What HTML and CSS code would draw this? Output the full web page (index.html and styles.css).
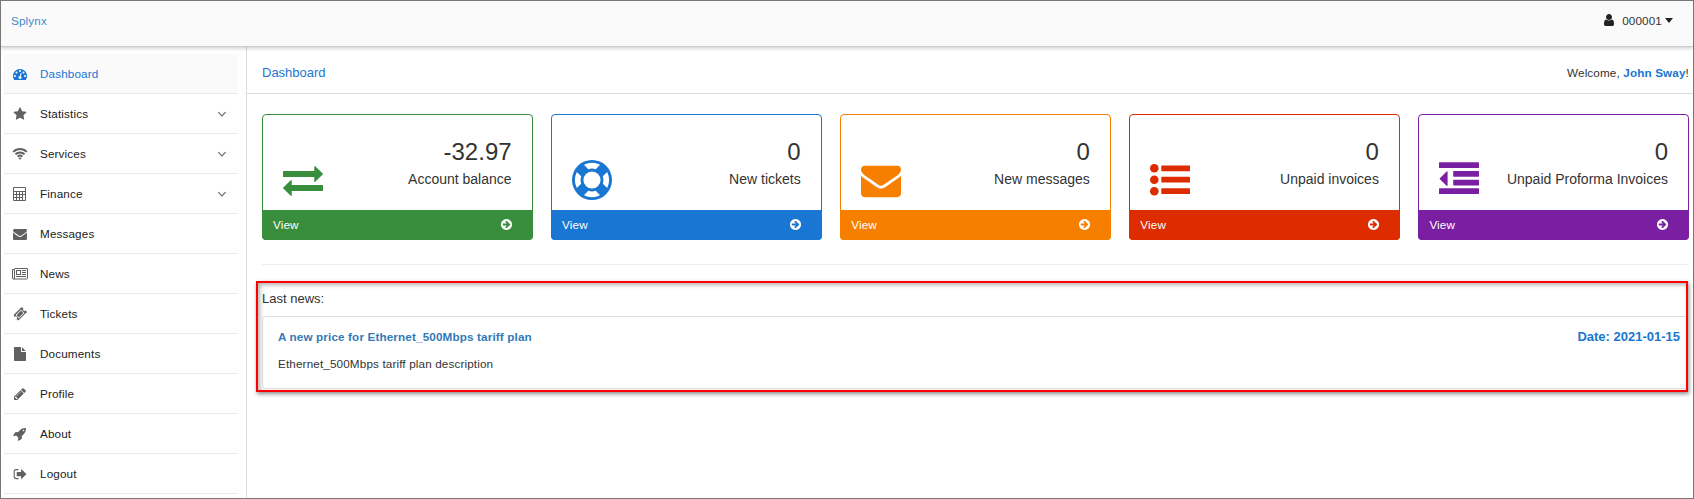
FILE: index.html
```html
<!DOCTYPE html>
<html lang="en">
<head>
<meta charset="utf-8">
<title>Dashboard</title>
<link rel="stylesheet" href="styles.css">
</head>
<body>
<svg class="sprite" aria-hidden="true">
  <symbol id="gauge" viewBox="0 0 1792 1792"><path d="M384 1152q0-53-37.5-90.5t-90.5-37.5-90.5 37.5-37.5 90.5 37.5 90.5 90.5 37.5 90.5-37.5 37.5-90.5zm192-448q0-53-37.5-90.5t-90.5-37.5-90.5 37.5-37.5 90.5 37.5 90.5 90.5 37.5 90.5-37.5 37.5-90.5zm428 481l101-382q6-26-7.5-48.5t-38.5-29.5-48 6.5-30 39.5l-101 382q-60 5-107 43.5t-63 98.5q-20 77 20 146t117 89 146-20 89-117q16-60-6-117t-72-91zm660-33q0-53-37.5-90.5t-90.5-37.5-90.5 37.5-37.5 90.5 37.5 90.5 90.5 37.5 90.5-37.5 37.5-90.5zm-640-640q0-53-37.5-90.5t-90.5-37.5-90.5 37.5-37.5 90.5 37.5 90.5 90.5 37.5 90.5-37.5 37.5-90.5zm448 192q0-53-37.5-90.5t-90.5-37.5-90.5 37.5-37.5 90.5 37.5 90.5 90.5 37.5 90.5-37.5 37.5-90.5zm320 448q0 261-141 483-19 29-54 29h-1402q-35 0-54-29-141-221-141-483 0-182 71-348t191-286 286-191 348-71 348 71 286 191 191 286 71 348z"/></symbol>
  <symbol id="star" viewBox="0 0 1792 1792"><path d="M1728 647q0 22-26 48l-363 354 86 500q1 7 1 20 0 21-10.5 35.5t-30.5 14.5q-19 0-40-12l-449-236-449 236q-22 12-40 12-21 0-31.5-14.5t-10.5-35.5q0-6 2-20l86-500-364-354q-25-27-25-48 0-37 56-46l502-73 225-455q19-41 49-41t49 41l225 455 502 73q56 9 56 46z"/></symbol>
  <symbol id="wifi" viewBox="0 0 16 16"><g fill="none" stroke="currentColor" stroke-width="1.9"><path d="M1.200 5.800a9.600 9.600 0 0 1 13.600 0M3.500 8.300a6.400 6.400 0 0 1 9 0M5.700 10.700a3.300 3.300 0 0 1 4.600 0"/></g><path d="M6.500 12.200a2.300 2.300 0 0 1 3 0L8 13.700z"/></symbol>
  <symbol id="calc" viewBox="0 0 14 14"><path fill-rule="evenodd" d="M1 0h11a1 1 0 0 1 1 1v12a1 1 0 0 1-1 1H1a1 1 0 0 1-1-1V1a1 1 0 0 1 1-1zm0 1v3h11V1zM1 5v2h2V5zM4 5v2h2V5zM7 5v2h2V5zM10 5v2h2V5zM1 8v2h2V8zM4 8v2h2V8zM7 8v2h2V8zM1 11v2h2v-2zM4 11v2h2v-2zM7 11v2h2v-2zM10 8v5h2V8z"/></symbol>
  <symbol id="envelope" viewBox="0 0 1792 1792"><path d="M1792 710v794q0 66-47 113t-113 47h-1472q-66 0-113-47t-47-113v-794q44 49 101 87 362 246 497 345 57 42 92.500 65.500t94.500 48 110 24.500h2q51 0 110-24.500t94.500-48 92.500-65.500q170-123 498-345 57-39 100-87zm0-294q0 79-49 151t-122 123q-376 261-468 325-10 7-42.500 31t-54 38.500-52 32.500-57.500 27-50 9h-2q-23 0-50-9t-57.500-27-52-32.500-54-38.500-42.500-31q-91-64-262-182.500t-205-142.500q-62-42-117-115.500t-55-136.500q0-78 41.500-130t118.500-52h1472q65 0 112.500 47t47.500 113z"/></symbol>
  <symbol id="news" viewBox="0 0 16 12"><path fill="none" stroke="currentColor" d="M2.500.5h13v9.500q0 1-1 1h-13q-1 0-1-1V1.500h2V10q0 1-1 1"/><path fill-rule="evenodd" d="M4 2h5v5H4zm1 1v3h3V3zM10 2h4v1h-4zM10 4h4v1h-4zM10 6h4v1h-4zM4 8h10v1H4z"/></symbol>
  <symbol id="ticket" viewBox="0 0 1792 1792"><path fill-rule="evenodd" d="M1657 762l-895 896q-37 37-90.500 37t-90.500-37l-125-125q56-56 56-136t-56-136-136-56-136 56L135 1136q-37-37-37-90.500T135 955L1030 60q37-37 90.500-37t90.500 37l124 124q-56 56-56 136t56 136 136 56 136-56l125 125q37 37 37 90.500t-112 90.500zM1024 330L330 1024l438 438 694-694z"/><path d="M1024 462l306 306-562 562-306-306z"/></symbol>
  <symbol id="file" viewBox="0 0 1792 1792"><path d="M1152 512V40q22 14 36 28l408 408q14 14 28 36zm-128 32q0 40 28 68t68 28h544v1056q0 40-28 68t-68 28H224q-40 0-68-28t-28-68V96q0-40 28-68t68-28h800z"/></symbol>
  <symbol id="pencil" viewBox="0 0 1792 1792"><path d="M491 1536l91-91-235-235-91 91v107h128v128h107zm523-928q0-22-22-22-10 0-17 7l-542 542q-7 7-7 17 0 22 22 22 10 0 17-7l542-542q7-7 7-17zm-54-192l416 416-832 832h-416v-416zm683 96q0 53-37 90l-166 166-416-416 166-165q36-38 90-38 53 0 91 38l235 234q37 39 37 91z"/></symbol>
  <symbol id="rocket" viewBox="0 0 1792 1792"><path d="M1440 448q0-40-28-68t-68-28-68 28-28 68 28 68 68 28 68-28 28-68zm224-288q0 249-75.500 430.500t-253.500 360.500q-81 80-195 176l-20 379q-2 16-16 26l-384 224q-7 4-16 4-12 0-23-9l-64-64q-13-14-8-32l85-276-281-281-276 85q-3 1-9 1-14 0-23-9l-64-64q-17-19-5-39l224-384q10-14 26-16l379-20q96-114 176-195 188-187 358-258t431-71q14 0 24 9.500t10 22.500z"/></symbol>
  <symbol id="logout" viewBox="0 0 14 14"><path fill="none" stroke="currentColor" stroke-width="1.100" d="M5.500 2.600H3.200Q1.200 2.600 1.200 4.600v5q0 2 2 2h2.300"/><path d="M4.200 5h3.900V2.800q0-.8.700-.3l4.300 4.200q.4.400 0 .8L8.800 11.700q-.7.500-.7-.3V9.200H4.200q-.5 0-.5-.5V5.500q0-.5.500-.5z"/></symbol>
  <symbol id="user" viewBox="0 0 1792 1792"><path d="M1536 1399q0 109-62.500 187t-150.500 78h-854q-88 0-150.500-78t-62.500-187q0-85 8.500-160.500t31.500-152 58.500-131 94-89 134.500-34.500q131 128 313 128t313-128q76 0 134.500 34.500t94 89 58.500 131 31.500 152 8.500 160.500zm-256-887q0 159-112.500 271.500t-271.500 112.500-271.500-112.500-112.500-271.500 112.500-271.500 271.500-112.500 271.500 112.500 112.500 271.500z"/></symbol>
  <symbol id="go" viewBox="0 0 1792 1792"><path d="M1413 896q0-27-18-45l-91-91-362-362q-18-18-45-18t-45 18l-91 91q-18 18-18 45t18 45l189 189h-502q-26 0-45 19t-19 45v128q0 26 19 45t45 19h502l-189 189q-19 19-19 45t19 45l91 91q18 18 45 18t45-18l362-362 91-91q18-18 18-45zm251 0q0 209-103 385.500t-279.500 279.500-385.500 103-385.500-103-279.500-279.500-103-385.500 103-385.500 279.500-279.500 385.500-103 385.500 103 279.500 279.500 103 385.500z"/></symbol>
  <symbol id="down" viewBox="0 0 10 6"><path fill="none" stroke="currentColor" stroke-width="1.200" d="M1.300 1.100l3.700 3.700 3.700-3.700"/></symbol>
  <symbol id="exchange" viewBox="0 0 40 40"><path d="M.5 11H31.300V6.600q0-1 .9-.4l7.500 7.300q.4.500 0 1l-7.500 7.300q-.9.600-.9-.4V17H.5q-.5 0-.5-.5v-5q0-.5.500-.5zM39.500 25H8.700v-4.400q0-1-.9-.4L.300 27.500q-.4.500 0 1l7.500 7.300q.9.600.9-.4V31h30.800q.5 0 .5-.5v-5q0-.5-.5-.5z"/></symbol>
  <symbol id="ring" viewBox="0 0 1792 1792"><path d="M896 0q182 0 348 71t286 191 191 286 71 348-71 348-191 286-286 191-348 71-348-71-286-191-191-286-71-348 71-348 191-286 286-191 348-71zm0 128q-190 0-361 90l194 194q82-28 167-28t167 28l194-194q-171-90-361-90zm-678 1129l194-194q-28-82-28-167t28-167l-194-194q-90 171-90 361t90 361zm678 407q190 0 361-90l-194-194q-82 28-167 28t-167-28l-194 194q171 90 361 90zm0-384q159 0 271.500-112.500t112.500-271.500-112.500-271.500-271.500-112.500-271.500 112.500-112.500 271.500 112.500 271.500 271.500 112.500zm484-217l194 194q90-171 90-361t-90-361l-194 194q28 82 28 167t-28 167z"/></symbol>
  <symbol id="list" viewBox="0 0 40 40"><circle cx="4.300" cy="8.300" r="4.300"/><circle cx="4.300" cy="19.700" r="4.300"/><circle cx="4.300" cy="31.200" r="4.300"/><rect x="11.300" y="5.400" width="28.700" height="5.800" rx=".6"/><rect x="11.300" y="16.800" width="28.700" height="5.800" rx=".6"/><rect x="11.300" y="28.300" width="28.700" height="5.800" rx=".6"/></symbol>
  <symbol id="outdent" viewBox="0 0 40 40"><path d="M8.600 12v13.300q0 1-1 .5L.9 19.200q-.5-.5 0-1l6.700-6.700q1-.5 1 .5z"/><rect y="2.200" width="40" height="5.800" rx=".6"/><rect x="14.200" y="11" width="25.800" height="5.700" rx=".6"/><rect x="14.200" y="19.700" width="25.800" height="5.700" rx=".6"/><rect y="28.200" width="40" height="5.800" rx=".6"/></symbol>
</svg>
<div class="page">
  <header class="topbar">
    <a class="brand">Splynx</a>
    <div class="account"><svg class="icon"><use href="#user"/></svg><span>000001</span><i class="caret"></i></div>
  </header>
  <div class="body">
    <nav class="sidebar">
      <a class="item active"><svg class="icon"><use href="#gauge"/></svg><span>Dashboard</span></a>
      <a class="item"><svg class="icon"><use href="#star"/></svg><span>Statistics</span><svg class="chevron"><use href="#down"/></svg></a>
      <a class="item"><svg class="icon wide"><use href="#wifi"/></svg><span>Services</span><svg class="chevron"><use href="#down"/></svg></a>
      <a class="item"><svg class="icon"><use href="#calc"/></svg><span>Finance</span><svg class="chevron"><use href="#down"/></svg></a>
      <a class="item"><svg class="icon"><use href="#envelope"/></svg><span>Messages</span></a>
      <a class="item"><svg class="icon wide news-icon"><use href="#news"/></svg><span>News</span></a>
      <a class="item"><svg class="icon"><use href="#ticket"/></svg><span>Tickets</span></a>
      <a class="item"><svg class="icon"><use href="#file"/></svg><span>Documents</span></a>
      <a class="item"><svg class="icon"><use href="#pencil"/></svg><span>Profile</span></a>
      <a class="item"><svg class="icon"><use href="#rocket"/></svg><span>About</span></a>
      <a class="item"><svg class="icon"><use href="#logout"/></svg><span>Logout</span></a>
    </nav>
    <main class="content">
      <div class="heading"><h1>Dashboard</h1><p>Welcome, <b>John Sway</b><span>!</span></p></div>
      <section class="cards">
        <article class="card green"><div class="card-main"><svg class="big"><use href="#exchange"/></svg><div class="figures"><strong>-32.97</strong><span>Account balance</span></div></div><a class="view"><span>View</span><svg class="icon"><use href="#go"/></svg></a></article>
        <article class="card blue"><div class="card-main"><svg class="big"><use href="#ring"/></svg><div class="figures"><strong>0</strong><span>New tickets</span></div></div><a class="view"><span>View</span><svg class="icon"><use href="#go"/></svg></a></article>
        <article class="card orange"><div class="card-main"><svg class="big"><use href="#envelope"/></svg><div class="figures"><strong>0</strong><span>New messages</span></div></div><a class="view"><span>View</span><svg class="icon"><use href="#go"/></svg></a></article>
        <article class="card red"><div class="card-main"><svg class="big"><use href="#list"/></svg><div class="figures"><strong>0</strong><span>Unpaid invoices</span></div></div><a class="view"><span>View</span><svg class="icon"><use href="#go"/></svg></a></article>
        <article class="card purple"><div class="card-main"><svg class="big"><use href="#outdent"/></svg><div class="figures"><strong>0</strong><span>Unpaid Proforma Invoices</span></div></div><a class="view"><span>View</span><svg class="icon"><use href="#go"/></svg></a></article>
      </section>
      <hr>
      <section class="news">
        <h2>Last news:</h2>
        <article class="post">
          <div class="post-head"><h3>A new price for Ethernet_500Mbps tariff plan</h3><time>Date: 2021-01-15</time></div>
          <p>Ethernet_500Mbps tariff plan description</p>
        </article>
      </section>
    </main>
  </div>
</div>
</body>
</html>
```
FILE: styles.css
```css
* { box-sizing: border-box; }
body { margin: 0; background: #fff; color: #333; font: 11.7px/18px "Liberation Sans", Arial, sans-serif; letter-spacing: .14px; overflow: hidden; }
h1, h2, h3, p { margin: 0; font-weight: normal; }
svg { display: block; fill: currentColor; flex: none; }
.sprite { display: none; }
.page { height: 499px; border: 1px solid #777; display: flex; flex-direction: column; overflow: hidden; }
.topbar { height: 46px; flex: none; background: #fafafa; border-bottom: 1px solid #ccc; box-shadow: 0 1px 4px rgba(0,0,0,.22); display: flex; justify-content: space-between; padding: 11px 20px 0 10px; z-index: 1; }
.brand { color: #428bca; }
.account { display: flex; height: 18px; align-items: center; }
.account .icon { color: #222; margin: -2px 6px 0 0; }
.icon { width: 14px; height: 14px; }
.caret { border: 4.5px solid transparent; border-top: 5px solid #222; border-bottom: 0; margin: -2px 0 0 3px; }
.body { flex: 1; display: flex; min-height: 0; }
.sidebar { width: 246px; flex: none; border-right: 1px solid #ddd; padding: 7px 8px 0 3px; overflow: hidden; }
.item { height: 40px; border-bottom: 1px solid #eaeaea; display: flex; align-items: center; padding: 1px 11px 0 9px; color: #222; }
.item .icon { color: #616161; margin-right: 13px; }
.item .wide { width: 16px; height: 16px; margin: 0 12px 0 -1px; }
.item .news-icon { height: 12px; }
.item.active, .item.active .icon { color: #1976d2; }
.item.active { background: #fafafa; }
.chevron { width: 10px; height: 6px; margin-left: auto; color: #666; }
.content { flex: 1; }
.heading { height: 47px; border-bottom: 1px solid #ddd; padding: 5px 4px 0 15px; display: flex; justify-content: space-between; align-items: center; }
.heading h1 { font-size: 13px; letter-spacing: 0; color: #1976d2; }
.heading b { color: #1976d2; }
.cards { display: grid; grid-template-columns: repeat(5, 1fr); gap: 18.5px; padding: 20px 4px 0 15px; }
.card { height: 126px; border: 1px solid currentColor; border-radius: 4px; display: flex; flex-direction: column; }
.green { color: #388e3c; }
.blue { color: #1976d2; }
.orange { color: #f77f00; }
.red { color: #dd2c00; }
.purple { color: #7b1fa2; }
.card-main { flex: 1; display: flex; justify-content: space-between; padding: 21px 20px 0; }
.big { width: 40px; height: 40px; margin-top: 24px; }
.figures { color: #333; text-align: right; letter-spacing: 0; }
.figures strong { display: block; font-size: 24px; line-height: 32px; font-weight: normal; }
.figures span { display: block; font-size: 14px; line-height: 22px; }
.view { height: 30px; margin: 0 -1px -1px; padding: 0 20px 0 11px; background: currentColor; border-radius: 0 0 4px 4px; display: flex; align-items: center; justify-content: space-between; }
.view span, .view .icon { color: #fff; }
.view .icon { width: 13px; height: 13px; margin-top: -1px; }
hr { border: 0; border-top: 1px solid #eee; margin: 24px 4px 0 15px; }
.news { margin: 16px 5px 0 9px; border: 2px solid #f00; height: 111px; padding: 7px 0 0 4px; box-shadow: 1px 2px 4px rgba(0,0,0,.45), inset 2px 2px 4px rgba(0,0,0,.3); }
.news h2 { font-size: 13px; letter-spacing: 0; }
.post { margin-top: 8px; height: 73px; border: 1px solid #ddd; border-right: 0; border-radius: 4px 0 0 4px; padding: 11px 6px 0 15px; }
.post-head { display: flex; justify-content: space-between; }
.post h3 { font-size: 11.7px; font-weight: bold; color: #337ab7; }
.post time { font-size: 13px; letter-spacing: 0; font-weight: bold; color: #1976d2; }
.post p { margin-top: 9px; }
```
